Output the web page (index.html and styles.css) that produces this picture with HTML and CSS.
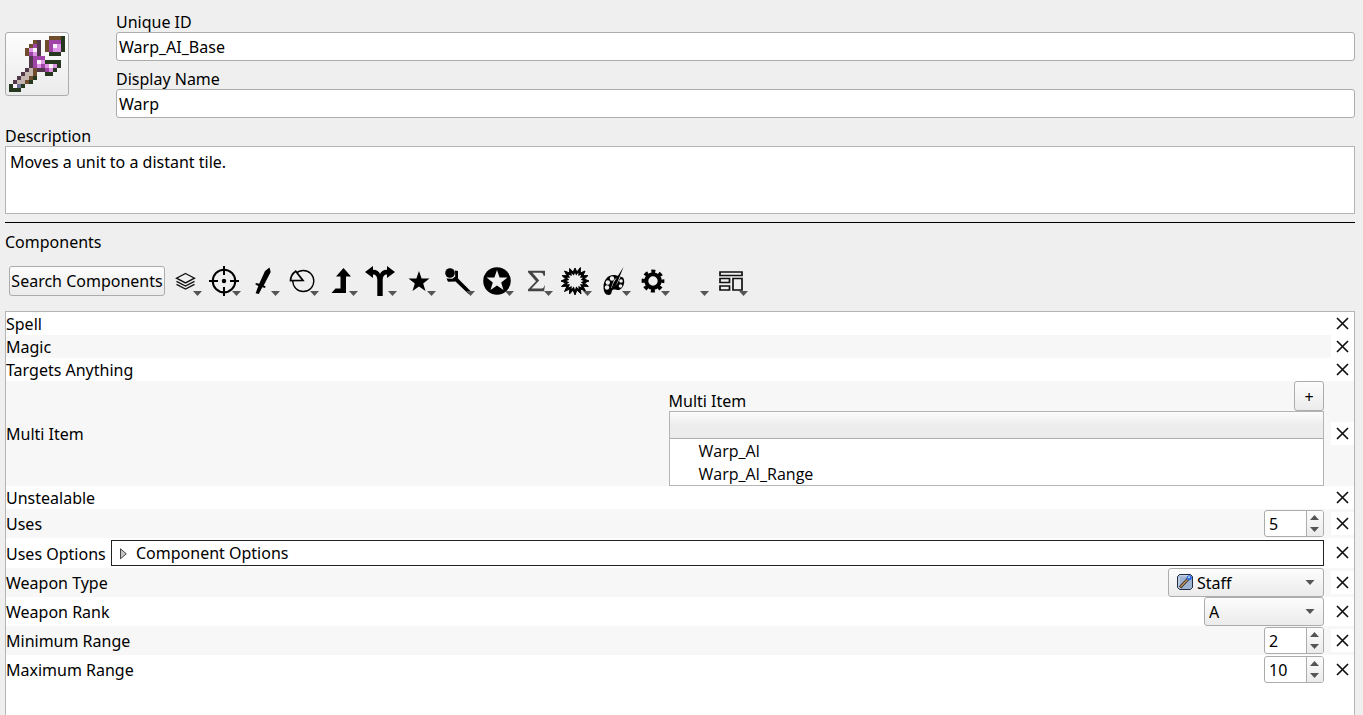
FILE: index.html
```html
<!DOCTYPE html>
<html lang="en">
<head>
<meta charset="utf-8">
<title>Item Editor</title>
<link rel="stylesheet" href="styles.css">
</head>
<body>
<svg class="defs" aria-hidden="true">
  <symbol id="caret" viewBox="0 0 9 5"><path d="M0 0h9L4.500 5z" fill="#555"/></symbol>
  <symbol id="caret-up" viewBox="0 0 9 5"><path d="M0 5h9L4.500 0z" fill="#555"/></symbol>
  <symbol id="cross" viewBox="0 0 13 13"><path d="M1 1l11 11M12 1L1 12" stroke="#111" stroke-width="1.700" fill="none"/></symbol>
  <symbol id="star" viewBox="-11 -11 22 22"><path d="M0-11L2.600-3.500 10.500-3.400 4.200 1.400 6.500 8.900 0 4.400-6.500 8.900-4.200 1.400-10.500-3.400-2.600-3.500z"/></symbol>
</svg>
<main class="editor">
  <section class="identity">
    <button class="sprite-button" type="button" aria-label="Choose icon">
      <svg width="56" height="56" viewBox="0 0 14 14" shape-rendering="crispEdges">
        <path fill="#6e4c2c" d="M10 0h3v1h-3zM9 1h1v3h-1zM6 1h1v1h-1zM5 2h1v1h-1zM4 3h1v2h-1zM6 8h1v1h-1zM6 9h1v1h-1zM5 10h1v1h-1zM4 11h1v1h-1z"/>
        <path fill="#26381f" d="M13 0h1v4h-1zM10 4h3v1h-3zM9 6h4v1h-4zM12 7h1v1h-1zM11 8h1v1h-1zM9 9h2v1h-2zM6 10h1v1h-1zM5 11h1v1h-1zM3 12h1v1h-1zM0 12h1v1h-1zM0 13h3v1h-3z"/>
        <path fill="#50374a" d="M7 1h1v4h-1zM5 5h1v3h-1zM4 8h1v1h-1zM3 9h1v1h-1zM2 10h1v1h-1zM1 11h1v1h-1zM7 8h2v1h-2z"/>
        <path fill="#a044a8" d="M10 1h3v1h-3zM10 2h1v2h-1zM6 2h1v1h-1zM5 4h1v1h-1zM6 5h3v1h-3zM6 6h1v2h-1zM8 7h1v1h-1zM9 8h1v1h-1z"/>
        <path fill="#dd94e4" d="M12 2h1v1h-1zM11 3h2v1h-2zM5 3h1v1h-1zM6 4h1v1h-1zM8 6h1v1h-1zM7 7h1v1h-1zM9 7h1v1h-1zM11 7h1v1h-1zM10 8h1v1h-1z"/>
        <path fill="#fbf2fc" d="M11 2h1v1h-1zM6 3h1v1h-1zM7 6h1v1h-1zM10 7h1v1h-1zM1 12h1v1h-1z"/>
        <path fill="#c4b5b0" d="M5 8h1v1h-1zM4 9h2v1h-2zM3 10h2v1h-2zM2 11h2v1h-2z"/>
        <path fill="#6c7595" d="M2 12h1v1h-1z"/>
      </svg>
    </button>
    <div class="fields">
      <div class="field">
        <label for="uid">Unique ID</label>
        <input class="box" id="uid" type="text" value="Warp_AI_Base">
      </div>
      <div class="field">
        <label for="display-name">Display Name</label>
        <input class="box" id="display-name" type="text" value="Warp">
      </div>
    </div>
  </section>
  <div class="field description">
    <label for="desc">Description</label>
    <textarea id="desc">Moves a unit to a distant tile.</textarea>
  </div>
  <hr class="rule">
  <h1 class="heading">Components</h1>
  <div class="toolbar">
    <button class="search raised" type="button">Search Components</button>
    <button class="tool" type="button" aria-label="Base">
      <svg class="glyph" viewBox="0 0 39 34"><path fill="none" stroke="#111" stroke-width="1.300" d="M19.500 8.500l9 4.700-9 4.700-9-4.700zM10.500 16.300l9 4.700 9-4.700M10.500 19.300l9 4.700 9-4.700"/></svg>
      <svg class="drop"><use href="#caret"/></svg>
    </button>
    <button class="tool" type="button" aria-label="Target">
      <svg class="glyph" viewBox="0 0 39 34"><g fill="none" stroke="#000" stroke-width="2"><circle cx="19" cy="16" r="11.300"/><path d="M4 16h9M25 16h9M19 1v9M19 22v9"/></g><circle cx="19" cy="16" r="2.200"/></svg>
      <svg class="drop"><use href="#caret"/></svg>
    </button>
    <button class="tool" type="button" aria-label="Weapon">
      <svg class="glyph" viewBox="0 0 39 34"><path d="M25.500 2.500L26.700 7l-7 13.500 1.800.8-.4 1.800-2.800-.8-3.500 6.700-3.200-.8 2.700-7.200-2.900-1.500.5-1.500 3.300.8L21 6z"/></svg>
      <svg class="drop"><use href="#caret"/></svg>
    </button>
    <button class="tool" type="button" aria-label="Formula">
      <svg class="glyph" viewBox="0 0 39 34"><g fill="none" stroke="#000"><circle cx="20.300" cy="16" r="10.500" stroke-width="1.300"/><path d="M7.500 15.700A12 12 0 0 1 12.700 6.200L20 15.500z" fill="#efefef" stroke-width="1.700"/></g></svg>
      <svg class="drop"><use href="#caret"/></svg>
    </button>
    <button class="tool" type="button" aria-label="Extra">
      <svg class="glyph" viewBox="0 0 39 34"><path d="M21.500 3L29 11.500h-5V28H9.500l4-4.500h5v-12h-4.500z"/></svg>
      <svg class="drop"><use href="#caret"/></svg>
    </button>
    <button class="tool" type="button" aria-label="Advanced">
      <svg class="glyph" viewBox="0 0 39 34"><path d="M4 7l8-6v3.700c4 0 6 1.600 7 4.300 1-2.700 3-4.300 7-4.300V1l8 6-8 6V9.500c-3 0-4.300 2-4.300 5.500v16h-5.400V15c0-3.500-1.300-5.500-4.300-5.500V13z"/></svg>
      <svg class="drop"><use href="#caret"/></svg>
    </button>
    <button class="tool" type="button" aria-label="Special">
      <svg class="glyph" viewBox="0 0 39 34"><use href="#star" x="8" y="6" width="22" height="22"/></svg>
      <svg class="drop"><use href="#caret"/></svg>
    </button>
    <button class="tool" type="button" aria-label="Staff">
      <svg class="glyph" viewBox="0 0 39 34"><circle cx="11" cy="8" r="4.800"/><path d="M16 5.500l3 .5v7.500L32 26.500 29.500 29 16.500 16.500 9 16.700 7.500 13.500l6 .3 2.700-2.300z"/></svg>
      <svg class="drop"><use href="#caret"/></svg>
    </button>
    <button class="tool" type="button" aria-label="Aesthetic">
      <svg class="glyph" viewBox="0 0 39 34"><circle cx="19" cy="16" r="13.800"/><use href="#star" x="8" y="5" width="22" height="22" fill="#efefef"/></svg>
      <svg class="drop"><use href="#caret"/></svg>
    </button>
    <button class="tool" type="button" aria-label="Sum">
      <svg class="glyph" viewBox="0 0 39 34"><path fill="#444" d="M11 5.700h17v5h-1.500c-.3-2.300-1-3-3-3h-8l6.700 7.800-7.700 8h10c1.700 0 2.500-1 3-3H28l-1 5.700H11v-1.600l8-8.400-8-9z"/></svg>
      <svg class="drop"><use href="#caret"/></svg>
    </button>
    <button class="tool" type="button" aria-label="Burst">
      <svg class="glyph" viewBox="0 0 39 34"><defs><path id="spikes" d="M14 0L9.300 1.900 13.400 5.400 8 5.300 10.500 9.900 5.300 8 6 12.900 1.900 9 0 14-1.900 9-5.400 12.900-5.300 8-10.500 10.500-8 5.300-13.500 5.400-9.300 1.900-14 0-9.300-1.900-12.900-5.400-8-5.300-10.500-10-5.300-8-5.400-12.500-1.900-9 0-13 1.900-9 5.400-13.500 5.300-8 10-10 8-5.300 12.900-5.400 9.300-1.900z"/></defs><g transform="translate(19 16)"><use href="#spikes" stroke="#000"/><use href="#spikes" transform="scale(.62)" fill="#efefef"/></g></svg>
      <svg class="drop"><use href="#caret"/></svg>
    </button>
    <button class="tool" type="button" aria-label="Palette">
      <svg class="glyph" viewBox="0 0 39 34"><path d="M20 10C13 9 8.500 15 8.500 22c0 5 2 8 5 8 4.500 0 2-5 5-5.500 3-.4 4 1.500 6.500 0 4-2.500 5.500-8 3-12z"/><g fill="#efefef"><circle cx="17" cy="13.500" r="2.200"/><circle cx="12.800" cy="17.500" r="2.200"/><circle cx="12" cy="22.500" r="2.200"/><circle cx="26" cy="16" r="1.800"/><circle cx="25.500" cy="21" r="1.800"/><path d="M16 23l3-8 5-4 1.500 1-3.500 7z"/></g><path d="M28.500 2l-6 15c-1 3-3 5-6 5.500 1.500-2 1.500-5 3.500-7z"/></svg>
      <svg class="drop"><use href="#caret"/></svg>
    </button>
    <button class="tool" type="button" aria-label="Settings">
      <svg class="glyph" viewBox="0 0 39 34"><g fill="none" stroke="#000"><circle cx="19" cy="16" r="6.700" stroke-width="4"/><circle cx="19" cy="16" r="9.700" stroke-width="3.400" stroke-dasharray="4 3.618" stroke-dashoffset="2"/></g></svg>
      <svg class="drop"><use href="#caret"/></svg>
    </button>
    <button class="tool" type="button" aria-label="Custom">
      <svg class="drop"><use href="#caret"/></svg>
    </button>
    <button class="tool" type="button" aria-label="Templates">
      <svg class="glyph" viewBox="0 0 39 34"><path fill="none" stroke="#111" stroke-width="1.700" d="M8 7h22v3.500H8zM8 13.500h9.500v4H8zM8 21h9.500v4H8zM21 13.500h9V25h-9z"/></svg>
      <svg class="drop"><use href="#caret"/></svg>
    </button>
  </div>
  <ul class="components">
    <li class="row"><span class="name">Spell</span><button class="remove" type="button" aria-label="Remove Spell"><svg><use href="#cross"/></svg></button></li>
    <li class="row"><span class="name">Magic</span><button class="remove" type="button" aria-label="Remove Magic"><svg><use href="#cross"/></svg></button></li>
    <li class="row"><span class="name">Targets Anything</span><button class="remove" type="button" aria-label="Remove Targets Anything"><svg><use href="#cross"/></svg></button></li>
    <li class="row">
      <span class="name half">Multi Item</span>
      <div class="multi half">
        <div class="multi-head"><span>Multi Item</span><button class="add raised" type="button" aria-label="Add item">+</button></div>
        <div class="tree">
          <div class="tree-head"></div>
          <ul class="tree-items"><li>Warp_AI</li><li>Warp_AI_Range</li></ul>
        </div>
      </div>
      <button class="remove" type="button" aria-label="Remove Multi Item"><svg><use href="#cross"/></svg></button>
    </li>
    <li class="row"><span class="name">Unstealable</span><button class="remove" type="button" aria-label="Remove Unstealable"><svg><use href="#cross"/></svg></button></li>
    <li class="row tall">
      <label class="name" for="uses">Uses</label>
      <div class="spin"><input id="uses" type="number" value="5"><div class="steps"><button type="button" aria-label="More uses"><svg><use href="#caret-up"/></svg></button><button type="button" aria-label="Fewer uses"><svg><use href="#caret"/></svg></button></div></div>
      <button class="remove" type="button" aria-label="Remove Uses"><svg><use href="#cross"/></svg></button>
    </li>
    <li class="row tall options-row">
      <span class="name fit">Uses Options</span>
      <details class="options"><summary><svg width="7" height="12" viewBox="0 0 7 12"><path d="M.5.800v10L6.300 5.800z" fill="#c4c4c4" stroke="#444"/></svg>Component Options</summary></details>
      <button class="remove" type="button" aria-label="Remove Uses Options"><svg><use href="#cross"/></svg></button>
    </li>
    <li class="row tall">
      <label class="name" for="wtype">Weapon Type</label>
      <div class="combo wide">
        <select class="raised with-icon" id="wtype"><option>Staff</option></select>
        <svg class="combo-icon" width="16" height="16" viewBox="0 0 16 16"><path d="M2.500.5h11l2 2v11l-2 2h-11l-2-2v-11z" fill="#9fb4d0" stroke="#222b3d"/><path d="M2 3v10l2 1.500M3 1.800h9" fill="none" stroke="#d7e2f2"/><path d="M3 13.500L11.500 4.500" stroke="#2b2320" stroke-width="3"/><path d="M3.500 13L11 5" stroke="#c79a62" stroke-width="1.200"/><circle cx="12.300" cy="3.700" r="2.500" fill="#2866dd"/><circle cx="12" cy="3.300" r="1" fill="#bfe4ff"/></svg>
        <svg class="combo-arrow"><use href="#caret"/></svg>
      </div>
      <button class="remove" type="button" aria-label="Remove Weapon Type"><svg><use href="#cross"/></svg></button>
    </li>
    <li class="row tall">
      <label class="name" for="wrank">Weapon Rank</label>
      <div class="combo">
        <select class="raised" id="wrank"><option>A</option></select>
        <svg class="combo-arrow"><use href="#caret"/></svg>
      </div>
      <button class="remove" type="button" aria-label="Remove Weapon Rank"><svg><use href="#cross"/></svg></button>
    </li>
    <li class="row tall">
      <label class="name" for="minr">Minimum Range</label>
      <div class="spin"><input id="minr" type="number" value="2"><div class="steps"><button type="button" aria-label="Increase minimum"><svg><use href="#caret-up"/></svg></button><button type="button" aria-label="Decrease minimum"><svg><use href="#caret"/></svg></button></div></div>
      <button class="remove" type="button" aria-label="Remove Minimum Range"><svg><use href="#cross"/></svg></button>
    </li>
    <li class="row tall">
      <label class="name" for="maxr">Maximum Range</label>
      <div class="spin"><input id="maxr" type="number" value="10"><div class="steps"><button type="button" aria-label="Increase maximum"><svg><use href="#caret-up"/></svg></button><button type="button" aria-label="Decrease maximum"><svg><use href="#caret"/></svg></button></div></div>
      <button class="remove" type="button" aria-label="Remove Maximum Range"><svg><use href="#cross"/></svg></button>
    </li>
  </ul>
</main>
</body>
</html>
```
FILE: styles.css
```css
* { box-sizing: border-box; }

body {
  margin: 0;
  background: #efefef;
  color: #000;
  font: 16px/21px Tahoma, "Noto Sans", sans-serif;
}

button, input, select, textarea { font: inherit; color: inherit; margin: 0; }
button { padding: 0; border: 0; background: none; }
ul { list-style: none; margin: 0; padding: 0; }
svg { display: block; }
.defs { position: absolute; width: 0; height: 0; }

.editor {
  display: flex;
  flex-direction: column;
  height: 100vh;
  padding: 13px 8px 0 5px;
  overflow: hidden;
}

.raised, .sprite-button {
  border: 1px solid #acacac;
  border-radius: 3px;
  background: linear-gradient(#fdfdfd, #ebebeb);
}

/* Identity */
.identity { display: flex; align-items: center; gap: 47px; }
.sprite-button {
  flex: none;
  display: grid;
  place-items: center;
  width: 64px;
  height: 64px;
  margin-bottom: 3px;
}
.fields { flex: 1; display: flex; flex-direction: column; gap: 9px; }
.field { display: flex; flex-direction: column; }
.field label { line-height: 19px; }
.box {
  width: 100%;
  height: 29px;
  padding: 0 2px;
  border: 1px solid #acacac;
  border-radius: 3px;
  background: #fff;
}
.description { margin-top: 9px; }
textarea {
  height: 68px;
  padding: 5px 4px;
  border: 1px solid #b4b4b4;
  border-radius: 0;
  background: #fff;
  resize: none;
}
.rule { width: 100%; height: 1px; margin: 8px 0 0; border: 0; background: #000; }
.heading { margin: 9px 0 0; font-size: 16px; font-weight: 400; }

/* Toolbar */
.toolbar { display: flex; align-items: flex-start; height: 34px; margin: 12px 0 0 4px; }
.search { width: 156px; height: 30px; margin-top: 1px; white-space: nowrap; }
.tool { position: relative; width: 39px; height: 34px; }
.search + .tool { margin-left: 1px; }
.glyph { width: 39px; height: 34px; }
.drop { position: absolute; right: 3px; bottom: 3px; width: 9px; height: 5px; }

/* Component list */
.components {
  flex: 1;
  margin-top: 12px;
  border: 1px solid #b4b4b4;
  border-bottom: 0;
  background: #fff;
  overflow: hidden;
}
.row { display: flex; align-items: center; gap: 7px; min-height: 23px; }
.row:nth-child(even) { background: #f7f7f7; }
.tall { min-height: 29px; }
.options-row { min-height: 30px; }
.name { flex: 1; padding-top: 2px; }
.half { flex: 1 1 0; }
.fit { flex: none; width: 98px; white-space: nowrap; }
.remove { flex: none; display: grid; place-items: center; width: 23px; height: 23px; padding: 0 1px 1px 0; background: #fff; }
.remove svg { width: 13px; height: 13px; }

.multi-head { display: flex; align-items: flex-end; justify-content: space-between; line-height: 19px; }
.add { width: 30px; height: 30px; padding-top: 2px; }
.tree { border: 1px solid #b4b4b4; background: #fff; }
.tree-head { height: 27px; border-bottom: 1px solid #acacac; background: linear-gradient(#fcfcfc, #ededed 50%, #ebebeb); }
.tree-items li { padding: 2px 0 0 29px; font-family: "Open Sans", sans-serif; }

.spin {
  display: flex;
  width: 60px;
  height: 27px;
  border: 1px solid #acacac;
  border-radius: 3px;
  background: #fff;
  overflow: hidden;
}
.spin input { flex: 1; min-width: 0; padding: 2px 4px 0; border: 0; background: none; appearance: textfield; }
.spin input::-webkit-inner-spin-button { appearance: none; display: none; }
.steps { display: flex; flex-direction: column; width: 17px; padding-right: 1px; border-left: 1px solid #acacac; background: linear-gradient(#fcfcfc, #ebebeb); }
.steps button { flex: 1; display: grid; place-items: center; }
.steps svg { width: 9px; height: 5px; }

.options { flex: 1; height: 26px; border: 1px solid #222; background: #fff; }
.options summary { display: flex; align-items: center; gap: 9px; height: 24px; padding: 1px 0 0 8px; list-style: none; }

.combo { position: relative; width: 120px; height: 29px; }
.wide { width: 156px; }
.combo select { width: 100%; height: 29px; padding: 2px 4px 0; appearance: none; }
.combo .with-icon { padding-left: 28px; }
.combo-icon { position: absolute; left: 9px; top: 6px; pointer-events: none; }
.combo-arrow { position: absolute; right: 9px; top: 12px; width: 10px; height: 5px; pointer-events: none; }
```
